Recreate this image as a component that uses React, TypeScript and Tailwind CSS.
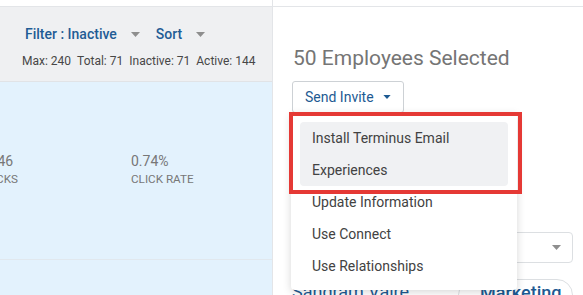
import React from 'react'

function Caret({ className }: { className?: string }) {
  return (
    <svg width="9" height="5" viewBox="0 0 9 5" className={className}>
      <path d="M0 0h9L4.5 5z" fill="currentColor" />
    </svg>
  )
}

const menuItems = ['Update Information', 'Use Connect', 'Use Relationships']

export default function App() {
  return (
    <div className="relative w-[583px] h-[295px] overflow-hidden bg-white font-['Roboto',sans-serif]">
      <div className="flex h-full">
        {/* Left list panel */}
        <div className="w-[273px] shrink-0 flex flex-col border-r border-[#e3e5e8]">
          <div className="h-[7px] shrink-0 border-b border-[#e3e5e8] bg-white" />
          <div className="h-[75px] shrink-0 bg-[#eff0f2] border-b border-[#e1e3e6] pt-[17px] pl-[22px]">
            <div className="flex items-center h-[20px] ml-[3px] text-[14px] font-medium text-[#1f5c95]">
              <span>Filter : Inactive</span>
              <Caret className="ml-[14px] text-[#8e8e8e]" />
              <span className="ml-[16px]">Sort</span>
              <Caret className="ml-[14px] text-[#8e8e8e]" />
            </div>
            <div className="flex gap-[6px] mt-[9px] whitespace-nowrap text-[12px] leading-[16px] text-[#474747]">
              <span>Max: 240</span>
              <span>Total: 71</span>
              <span>Inactive: 71</span>
              <span>Active: 144</span>
            </div>
          </div>
          <div className="flex-1 bg-[#e3f2fd] flex flex-col">
            <div className="h-[178px] shrink-0 border-b border-[#e1e8ee] pt-[70px]">
              <div className="flex -ml-[21px] text-[#777777]">
                <div className="w-[152px] shrink-0">
                  <div className="text-[14px] leading-[18px]">1,246</div>
                  <div className="text-[11.7px] leading-[16px] mt-px">CLICKS</div>
                </div>
                <div className="w-[151px] shrink-0">
                  <div className="text-[14px] leading-[18px]">0.74%</div>
                  <div className="text-[11.7px] leading-[16px] mt-px">CLICK RATE</div>
                </div>
              </div>
            </div>
            <div className="flex-1" />
          </div>
        </div>

        {/* Right selection panel */}
        <div className="flex-1 flex flex-col">
          <div className="h-[7px] shrink-0 border-b border-[#e3e5e8]" />
          <div className="shrink-0 pl-[19px] pr-[10px] pt-[37px]">
            <h2 className="ml-px text-[21px] leading-[28px] text-[#757575]">50 Employees Selected</h2>
            <button className="mt-[9px] h-[32px] w-[112px] flex items-center pl-[12px] border border-[#cdd1d5] rounded-[3px] bg-white text-[14px] text-[#1d5a92]">
              <span>Send Invite</span>
              <Caret className="ml-[9px] w-[8px] h-[4px]" />
            </button>
            <div className="mt-[119px] flex">
              <div className="ml-auto w-[115px] h-[31px] border border-[#dcdfe2] rounded-[4px] flex items-center justify-end pr-[11px]">
                <Caret className="text-[#8e8e8e]" />
              </div>
            </div>
            <div className="mt-[16px] flex items-start">
              <span className="mt-[2px] text-[18px] leading-[22px] text-[#1d5a92]">Sandram Vaire</span>
              <span className="ml-auto w-[115px] h-[32px] border border-[#dcdfe2] rounded-full pl-[21px] pt-[2px] text-[18px] leading-[22px] font-medium text-[#1d5a92]">
                Marketing
              </span>
            </div>
          </div>
        </div>
      </div>

      {/* Send Invite dropdown */}
      <div className="absolute left-[291px] top-[113px] w-[226px] h-[177px] bg-white rounded-b-[4px] shadow-[0_2px_8px_rgba(0,0,0,0.16)] pt-[9px] px-[9px] text-[14px] text-[#424242]">
        <div className="rounded-[4px] bg-[#f0f1f3] px-[12px]">
          <div className="h-[32px] flex items-center">Install Terminus Email</div>
          <div className="h-[32px] flex items-center">Experiences</div>
        </div>
        {menuItems.map((item) => (
          <div key={item} className="h-[32px] flex items-center px-[12px]">
            {item}
          </div>
        ))}
      </div>

      {/* Highlight annotation */}
      <div className="absolute left-[289px] top-[112px] w-[233px] h-[82px] border-4 border-[#e53935]" />
    </div>
  )
}
